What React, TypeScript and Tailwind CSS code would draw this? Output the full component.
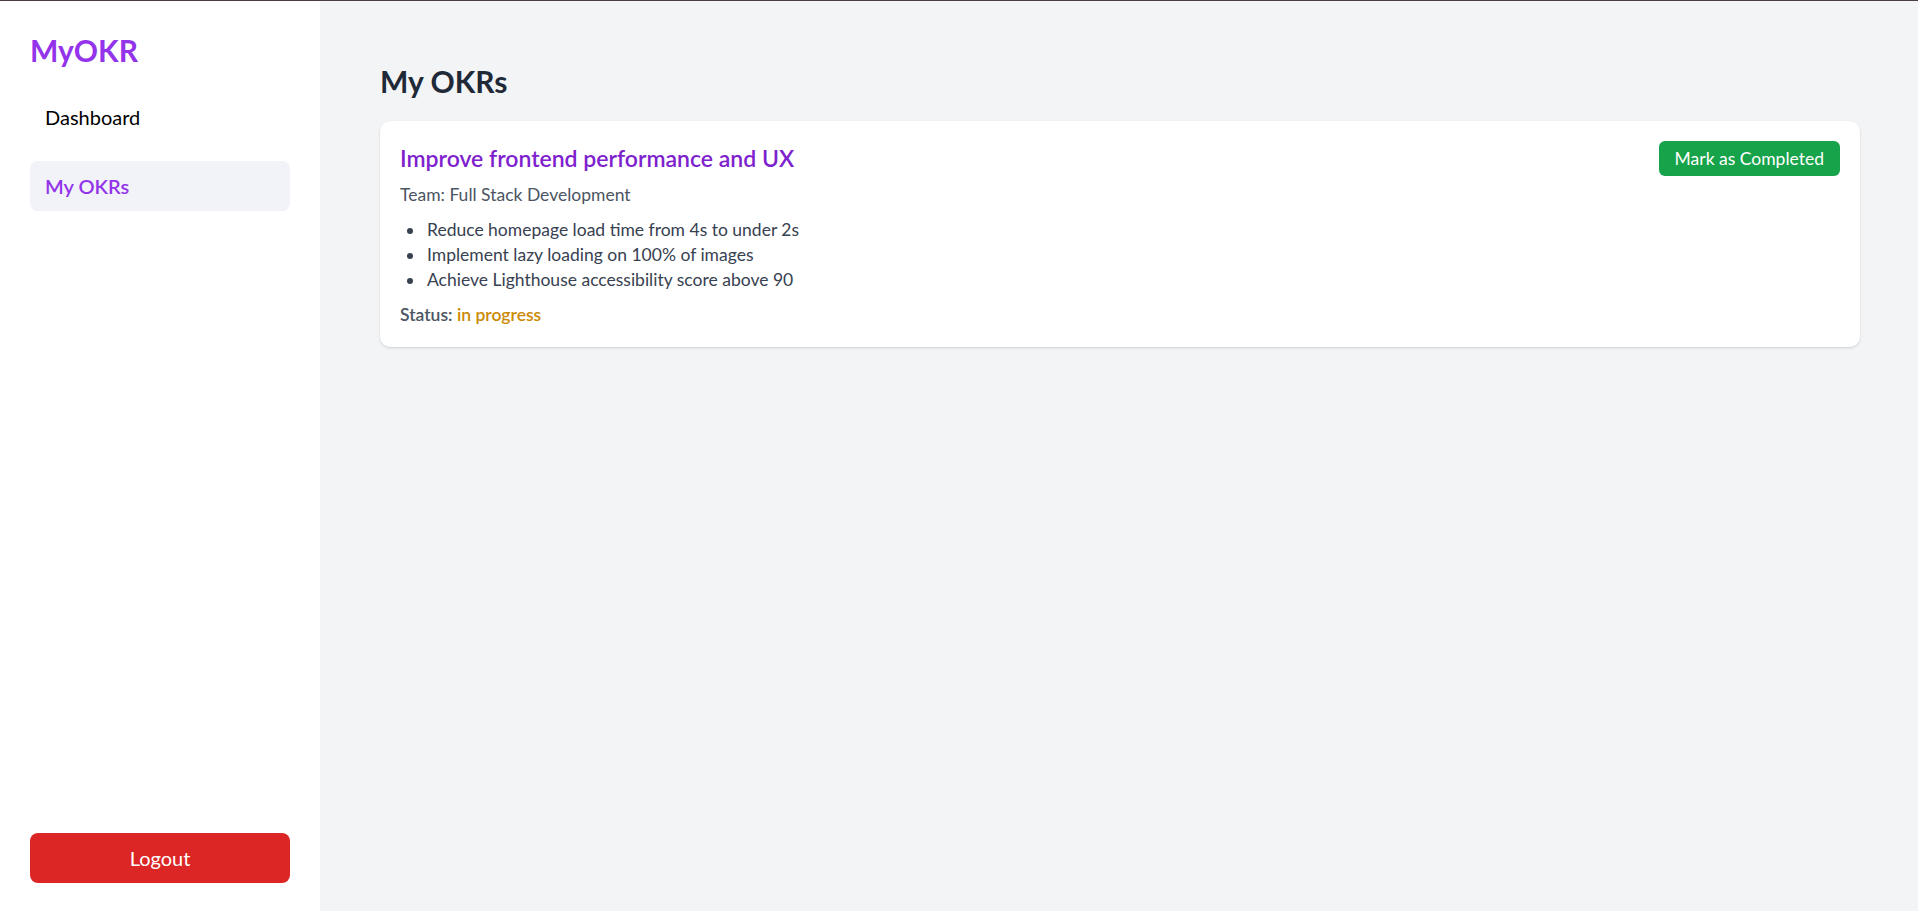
export default function App() {
  const keyResults = [
    "Reduce homepage load time from 4s to under 2s",
    "Implement lazy loading on 100% of images",
    "Achieve Lighthouse accessibility score above 90",
  ];

  return (
    <div className="flex h-[911px] flex-col font-['Lato','Noto_Sans',sans-serif]">
      <div className="h-px bg-[#4a3f40]" />
      <div className="flex min-h-0 flex-1">
        {/* Sidebar */}
        <aside className="flex w-[320px] flex-col justify-between bg-white px-[30px] pt-[29px] pb-[28px]">
          <div>
            <h1 className="text-[30px] leading-[40px] font-bold text-[#9333ea]">MyOKR</h1>
            <nav className="mt-[22px] flex flex-col gap-[19px]">
              <a href="#" className="rounded-[8px] px-[15px] py-[10px] text-[20px] leading-[30px] text-black">
                Dashboard
              </a>
              <a href="#" className="rounded-[8px] bg-[#f1f3f8] px-[15px] py-[10px] text-[20px] leading-[30px] font-semibold text-[#9333ea]">
                My OKRs
              </a>
            </nav>
          </div>
          <button className="h-[50px] w-full rounded-[8px] bg-[#dc2626] text-[20px] text-white">Logout</button>
        </aside>

        {/* Main */}
        <main className="flex-1 bg-[#f3f4f6] pt-[62px] pr-[58px] pl-[60px]">
          <h2 className="mb-[22px] text-[30px] leading-[36px] font-bold text-[#1f2937]">My OKRs</h2>
          <div className="rounded-[10px] bg-white p-[20px] shadow-[0_1px_3px_rgba(0,0,0,0.1),0_1px_2px_rgba(0,0,0,0.06)]">
            <div className="flex items-center justify-between">
              <h3 className="text-[23px] leading-[35px] font-semibold text-[#7e22ce]">
                Improve frontend performance and UX
              </h3>
              <button className="rounded-[6px] bg-[#16a34a] px-[16px] py-[5px] text-[17.5px] leading-[25px] text-white">
                Mark as Completed
              </button>
            </div>
            <p className="mt-[6px] text-[17.5px] leading-[25px] text-[#4b5563]">Team: Full Stack Development</p>
            <ul className="mt-[10px] list-disc pl-[25px] text-[17.5px] leading-[25px] text-[#374151] marker:text-[#374151]">
              {keyResults.map((kr) => (
                <li key={kr} className="pl-[2px]">{kr}</li>
              ))}
            </ul>
            <p className="mt-[10px] text-[17.5px] leading-[25px] font-semibold text-[#4b5563]">
              Status: <span className="text-[#ca8a04]">in progress</span>
            </p>
          </div>
        </main>
      </div>
    </div>
  );
}
